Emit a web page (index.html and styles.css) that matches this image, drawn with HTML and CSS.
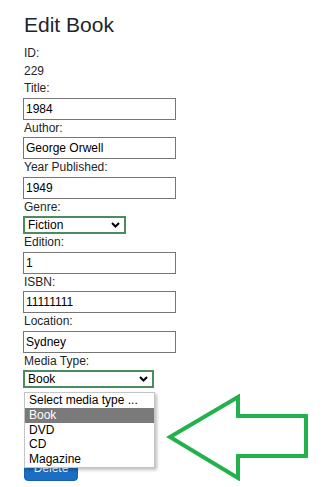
FILE: index.html
```html
<!DOCTYPE html>
<html lang="en">
<head>
  <meta charset="UTF-8" />
  <meta name="viewport" content="width=device-width, initial-scale=1.0"/>
  <title>Edit Book</title>
  <link rel="stylesheet" href="styles.css">
</head>
<body>
<div class="page">
  <h2>Edit Book</h2>

  <form class="book-form">
    <span class="label">ID:</span>
    <span class="label">229</span>

    <label for="title">Title:</label>
    <input type="text" id="title" value="1984" />

    <label for="author">Author:</label>
    <input type="text" id="author" value="George Orwell" />

    <label for="year">Year Published:</label>
    <input type="text" id="year" value="1949" />

    <label for="genre">Genre:</label>
    <select id="genre" class="genre-select">
      <option>Fiction</option>
      <option>Non-fiction</option>
    </select>

    <label for="edition">Edition:</label>
    <input type="text" id="edition" value="1" />

    <label for="isbn">ISBN:</label>
    <input type="text" id="isbn" value="11111111" />

    <label for="location">Location:</label>
    <input type="text" id="location" value="Sydney" />

    <label for="media">Media Type:</label>
    <div class="select-wrap">
      <select id="media" class="media-select">
        <option>Book</option>
      </select>
      <!-- open dropdown list -->
      <ul class="dropdown">
        <li>Select media type ...</li>
        <li class="active">Book</li>
        <li>DVD</li>
        <li>CD</li>
        <li>Magazine</li>
      </ul>
    </div>
  </form>

  <button class="delete-btn">Delete</button>

  <!-- annotation arrow -->
  <svg class="arrow" width="155" height="100" viewBox="0 0 155 100">
    <polygon points="10,49 78,9 78,28 146,28 146,68 78,68 78,90"
             fill="none" stroke="#22b14c" stroke-width="4" stroke-linejoin="miter" />
  </svg>
</div>
</body>
</html>
```

FILE: styles.css
```css
body {
  margin: 0;
  background: #fff;
  color: #212529;
  font-family: "Liberation Sans", Arial, sans-serif;
  font-size: 12px;
}
.page {
  position: relative;
  padding-left: 23px;
}
h2 {
  margin: 13px 0 8px;
  font-size: 21px;
  font-weight: normal;
  line-height: 24px;
  padding-left: 1px;
}
.book-form {
  display: flex;
  flex-direction: column;
  align-items: flex-start;
}
.label, label {
  display: block;
  line-height: 17.5px;
  padding-left: 1px;
}
input[type="text"] {
  box-sizing: border-box;
  width: 153px;
  height: 22px;
  margin: 0;
  padding: 1px 2px;
  border: 1px solid #767676;
  border-radius: 0;
  font-family: inherit;
  font-size: 12px;
  color: #000;
}
select {
  -webkit-appearance: none;
  appearance: none;
  box-sizing: border-box;
  height: 18px;
  margin: 0;
  padding: 0 0 0 3px;
  border: 2px solid #4a8c5c;
  border-radius: 0;
  background: #fff url("data:image/svg+xml,%3Csvg xmlns='http://www.w3.org/2000/svg' width='9' height='6' viewBox='0 0 9 6'%3E%3Cpath d='M1 1l3.5 3.5L8 1' fill='none' stroke='%23000' stroke-width='2'/%3E%3C/svg%3E") no-repeat right 4px center;
  font-family: inherit;
  font-size: 12px;
  line-height: 14px;
  color: #000;
}
.genre-select { width: 103px; }
.media-select { width: 131px; }
.select-wrap {
  position: relative;
}
.dropdown {
  position: absolute;
  top: 22px;
  left: 1px;
  z-index: 2;
  width: 129px;
  margin: 0;
  padding: 0;
  list-style: none;
  background: #fff;
  border: 1px solid #c4c4c4;
  box-shadow: 2px 2px 3px rgba(0, 0, 0, 0.25);
  color: #000;
}
.dropdown li {
  line-height: 14.8px;
  padding-left: 4px;
}
.dropdown li.active {
  background: #7a7a7a;
  color: #fff;
}
.delete-btn {
  display: block;
  width: 54px;
  height: 26px;
  margin: 67px 0 0 1px;
  padding: 0;
  background: #1b6ec2;
  border: 1px solid #1861ac;
  border-radius: 4px;
  color: #fff;
  font-family: inherit;
  font-size: 12px;
}
.arrow {
  position: absolute;
  left: 160px;
  top: 375px;
}
```
